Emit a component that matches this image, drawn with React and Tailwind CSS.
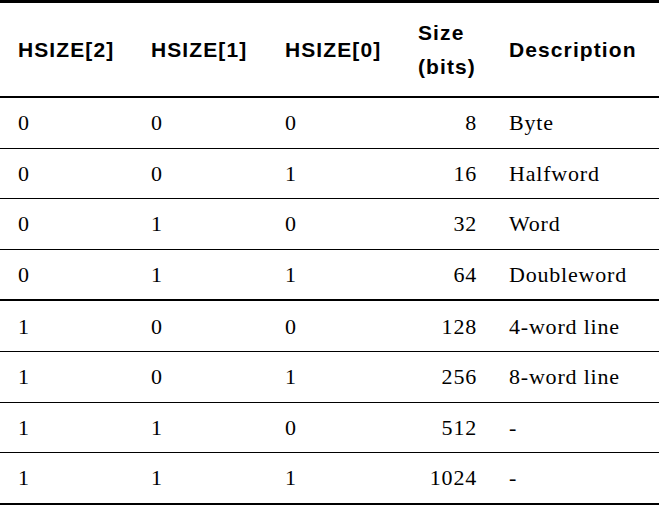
const ROWS = [
  ["0", "0", "0", "8", "Byte"],
  ["0", "0", "1", "16", "Halfword"],
  ["0", "1", "0", "32", "Word"],
  ["0", "1", "1", "64", "Doubleword"],
  ["1", "0", "0", "128", "4-word line"],
  ["1", "0", "1", "256", "8-word line"],
  ["1", "1", "0", "512", "-"],
  ["1", "1", "1", "1024", "-"],
];

const GRID = "grid grid-cols-[133px_134px_133px_91px_1fr] items-center";

export default function App() {
  return (
    <div className="h-[505px] w-[659px] bg-white text-black">
      <div className="border-t-[3px] border-black">
        <div
          className={`${GRID} h-[95px] border-b-2 border-black text-[21px] font-bold tracking-[1.1px]`}
          style={{ fontFamily: '"Liberation Sans", Arial, sans-serif' }}
        >
          <div className="pl-[18px]">HSIZE[2]</div>
          <div className="pl-[18px]">HSIZE[1]</div>
          <div className="pl-[18px]">HSIZE[0]</div>
          <div className="pl-[18px] leading-[34px]">
            Size
            <br />
            (bits)
          </div>
          <div className="pl-[18px]">Description</div>
        </div>

        {ROWS.map((row, i) => (
          <div
            key={i}
            className={`${GRID} h-[49.6px] box-content text-[22px] tracking-[0.8px] ${
              i === 3 ? "border-b-2" : i === ROWS.length - 1 ? "border-b-[3px]" : "border-b"
            } border-black`}
            style={{ fontFamily: '"Liberation Serif", "Times New Roman", serif' }}
          >
            <div className="pl-[18px]">{row[0]}</div>
            <div className="pl-[18px]">{row[1]}</div>
            <div className="pl-[18px]">{row[2]}</div>
            <div className="pr-[14px] text-right">{row[3]}</div>
            <div className="pl-[18px]">{row[4]}</div>
          </div>
        ))}
      </div>
    </div>
  );
}
